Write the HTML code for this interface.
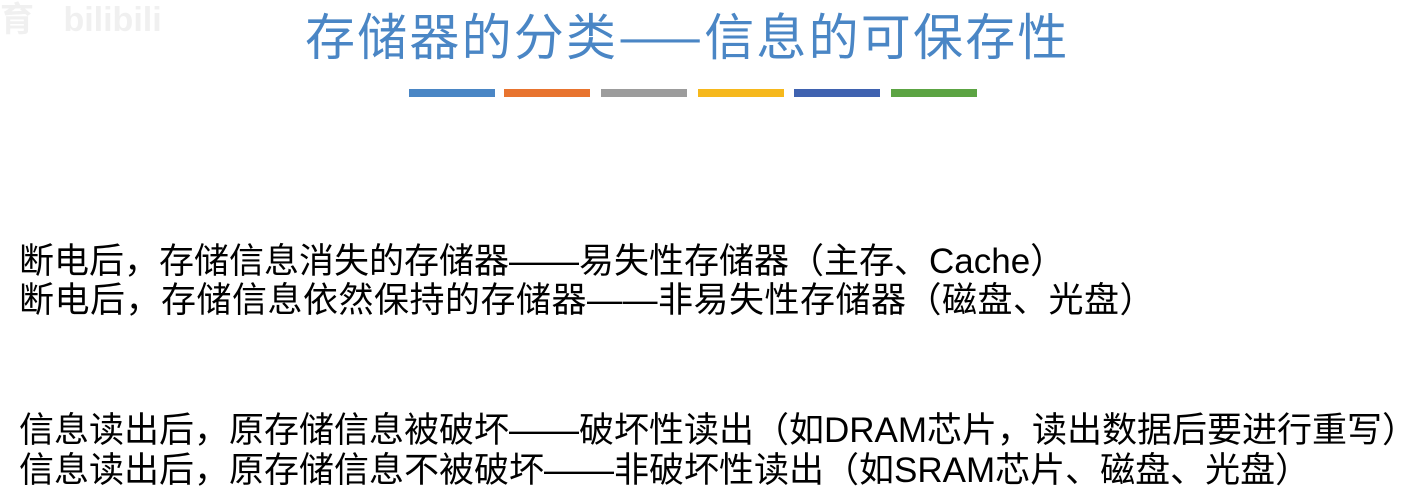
<!DOCTYPE html>
<html><head><meta charset="utf-8"><style>
html,body{margin:0;padding:0;background:#fff;width:1415px;height:495px;overflow:hidden;position:relative}
.t{position:absolute;left:305px;top:4px;font:50px/60px "Noto Sans CJK SC","WenQuanYi Zen Hei",sans-serif;color:#4a86c5;white-space:nowrap;letter-spacing:2.2px}
.bar{position:absolute;top:89px;height:8px;width:86px}
.l{position:absolute;left:19px;font:35px/40px "Liberation Sans","Noto Sans CJK SC",sans-serif;color:#000;white-space:nowrap}
.wm{position:absolute;left:0;top:0;font:bold 34px/40px "Liberation Sans","Noto Sans CJK SC",sans-serif;color:#f0f0f0}
</style></head><body>
<div class="wm">育 <span style="margin-left:20px">bilibili</span></div>
<div class="t">存储器的分类——信息的可保存性</div>
<div class="bar" style="left:409px;background:#4a86c5"></div>
<div class="bar" style="left:504px;background:#e8742f"></div>
<div class="bar" style="left:601px;background:#9c9c9c"></div>
<div class="bar" style="left:698px;background:#f6b81c"></div>
<div class="bar" style="left:794px;background:#3f62b0"></div>
<div class="bar" style="left:891px;background:#5ca443"></div>
<div class="l" style="top:242px">断电后，存储信息消失的存储器——易失性存储器（主存、Cache）</div>
<div class="l" style="top:281px;letter-spacing:0.5px">断电后，存储信息依然保持的存储器——非易失性存储器（磁盘、光盘）</div>
<div class="l" style="top:411px">信息读出后，原存储信息被破坏——破坏性读出（如DRAM芯片，读出数据后要进行重写）</div>
<div class="l" style="top:451px">信息读出后，原存储信息不被破坏——非破坏性读出（如SRAM芯片、磁盘、光盘）</div>
</body></html>
